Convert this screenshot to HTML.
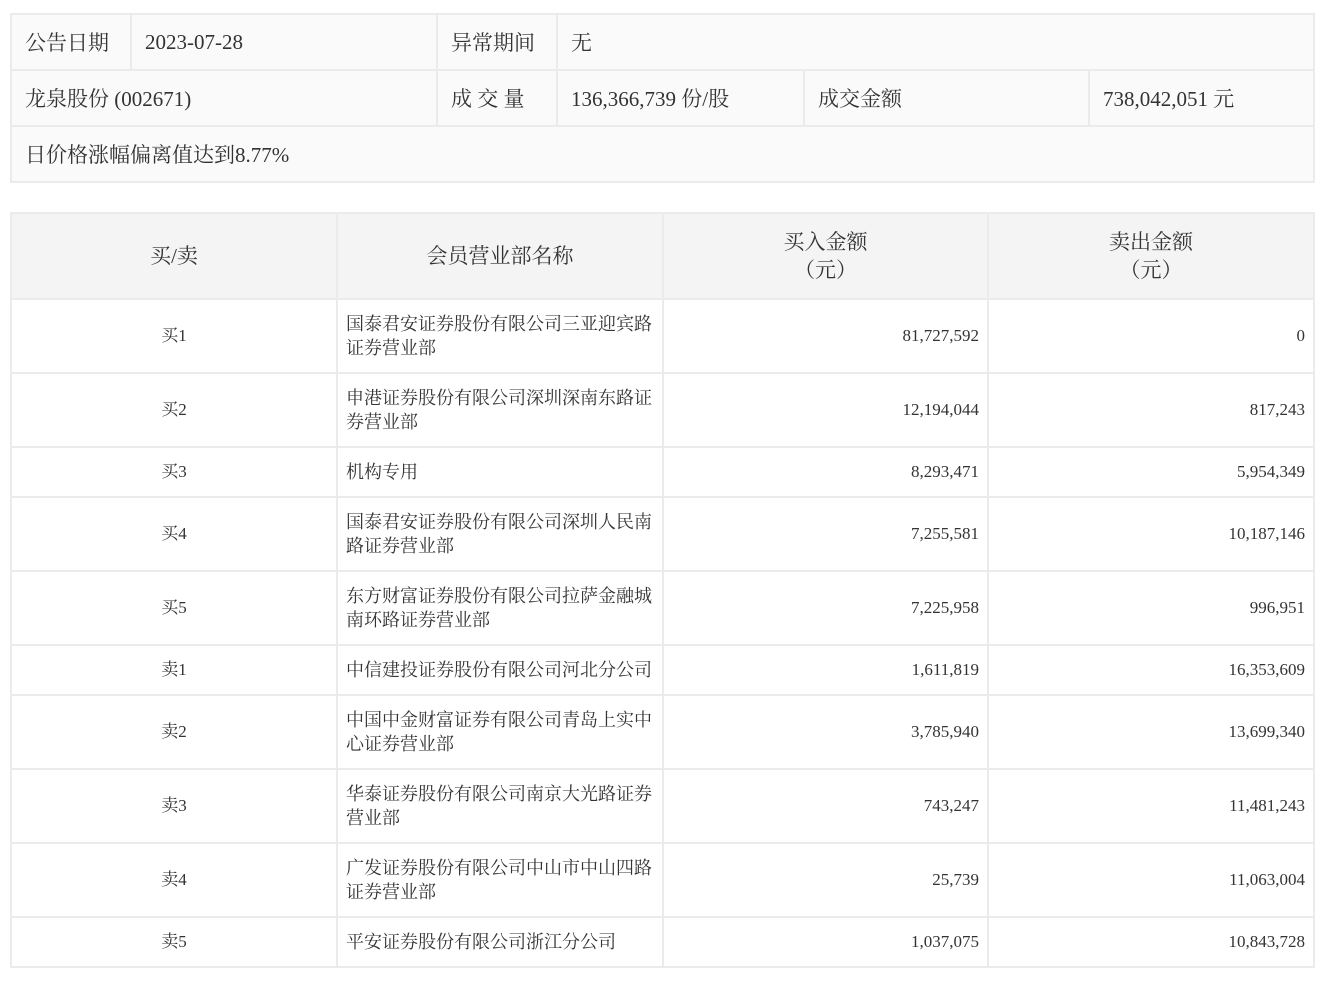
<!DOCTYPE html>
<html><head><meta charset="utf-8"><style>
body{margin:0;background:#fff;font-family:"Liberation Serif","Noto Serif CJK SC",serif;color:#333;}
table{border-collapse:collapse;position:absolute;table-layout:fixed;}
td{border:2px solid #ebebeb;padding:0;}
#t1{left:10px;top:13px;width:1303px;background:#fafafa;font-size:21px;}
#t1 td{height:54px;padding-left:13px;}
#t2{left:10px;top:212px;width:1303px;font-size:17px;}
#t2 th{background:#f4f4f4;border:2px solid #ebebeb;font-weight:normal;font-size:21px;height:82px;line-height:28px;}
#t2 td{padding:0 8px;line-height:24px;}
#t2 td.n{padding:0 4px 0 8px;font-size:18px;}
.c{text-align:center}.r{text-align:right}
</style></head><body>
<table id="t1">
<colgroup><col style="width:120px"><col style="width:306px"><col style="width:120px"><col style="width:247px"><col style="width:285px"><col style="width:225px"></colgroup>
<tr><td>公告日期</td><td>2023-07-28</td><td>异常期间</td><td colspan="3">无</td></tr>
<tr><td colspan="2">龙泉股份 (002671)</td><td>成 交 量</td><td>136,366,739 份/股</td><td>成交金额</td><td>738,042,051 元</td></tr>
<tr><td colspan="6">日价格涨幅偏离值达到8.77%</td></tr>
</table>
<table id="t2">
<colgroup><col style="width:326px"><col style="width:326px"><col style="width:325px"><col style="width:326px"></colgroup>
<tr><th>买/卖</th><th>会员营业部名称</th><th>买入金额<br>（元）</th><th>卖出金额<br>（元）</th></tr>
<tr style="height:74px"><td class="c">买1</td><td class="n">国泰君安证券股份有限公司三亚迎宾路证券营业部</td><td class="r">81,727,592</td><td class="r">0</td></tr>
<tr style="height:74px"><td class="c">买2</td><td class="n">申港证券股份有限公司深圳深南东路证券营业部</td><td class="r">12,194,044</td><td class="r">817,243</td></tr>
<tr style="height:50px"><td class="c">买3</td><td class="n">机构专用</td><td class="r">8,293,471</td><td class="r">5,954,349</td></tr>
<tr style="height:74px"><td class="c">买4</td><td class="n">国泰君安证券股份有限公司深圳人民南路证券营业部</td><td class="r">7,255,581</td><td class="r">10,187,146</td></tr>
<tr style="height:74px"><td class="c">买5</td><td class="n">东方财富证券股份有限公司拉萨金融城南环路证券营业部</td><td class="r">7,225,958</td><td class="r">996,951</td></tr>
<tr style="height:50px"><td class="c">卖1</td><td class="n">中信建投证券股份有限公司河北分公司</td><td class="r">1,611,819</td><td class="r">16,353,609</td></tr>
<tr style="height:74px"><td class="c">卖2</td><td class="n">中国中金财富证券有限公司青岛上实中心证券营业部</td><td class="r">3,785,940</td><td class="r">13,699,340</td></tr>
<tr style="height:74px"><td class="c">卖3</td><td class="n">华泰证券股份有限公司南京大光路证券营业部</td><td class="r">743,247</td><td class="r">11,481,243</td></tr>
<tr style="height:74px"><td class="c">卖4</td><td class="n">广发证券股份有限公司中山市中山四路证券营业部</td><td class="r">25,739</td><td class="r">11,063,004</td></tr>
<tr style="height:50px"><td class="c">卖5</td><td class="n">平安证券股份有限公司浙江分公司</td><td class="r">1,037,075</td><td class="r">10,843,728</td></tr>
</table>
</body></html>
